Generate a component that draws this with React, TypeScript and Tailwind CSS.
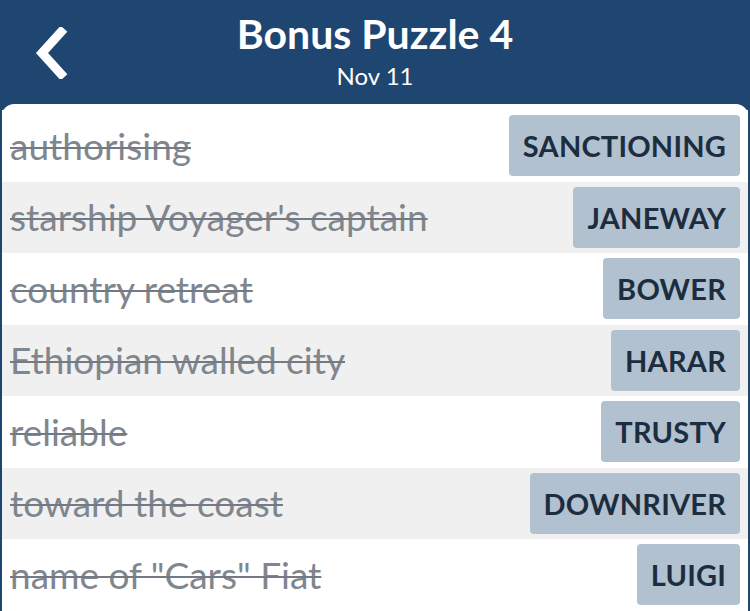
import React from 'react';

type Clue = {
  clue: string;
  answer: string;
};

const CLUES: Clue[] = [
  { clue: 'authorising', answer: 'SANCTIONING' },
  { clue: "starship Voyager's captain", answer: 'JANEWAY' },
  { clue: 'country retreat', answer: 'BOWER' },
  { clue: 'Ethiopian walled city', answer: 'HARAR' },
  { clue: 'reliable', answer: 'TRUSTY' },
  { clue: 'toward the coast', answer: 'DOWNRIVER' },
  { clue: 'name of "Cars" Fiat', answer: 'LUIGI' },
];

function BackIcon(): React.ReactElement {
  return (
    <svg width="34" height="52" viewBox="0 0 34 52" fill="none">
      <path
        d="M27 5 L8 26 L27 47"
        stroke="white"
        strokeWidth="9"
        strokeLinecap="square"
        strokeLinejoin="miter"
      />
    </svg>
  );
}

export default function App(): React.ReactElement {
  return (
    <div
      className="flex h-[611px] w-[750px] flex-col overflow-hidden bg-[#1f4571]"
      style={{ fontFamily: 'Lato, "Open Sans", sans-serif' }}
    >
      {/* шапка */}
      <header className="relative flex h-[104px] shrink-0 flex-col items-center text-white">
        <button className="absolute top-[27px] left-[34px] p-0">
          <BackIcon />
        </button>
        <h1 className="mt-[9px] text-[41px] leading-[50px] font-bold">
          Bonus Puzzle 4
        </h1>
        <p className="mt-[2px] text-[24px] leading-[30px]">Nov 11</p>
      </header>

      <div className="mx-[2px] flex-1 rounded-t-[12px] bg-white pt-[6px]">
        {CLUES.map((item, index) => (
          <div
            key={item.answer}
            className={`flex h-[71.5px] items-center justify-between pr-[8px] pl-[8px] ${
              index % 2 === 1 ? 'bg-[#f0f0f0]' : 'bg-white'
            }`}
          >
            <span className="text-[37px] leading-[44px] text-[#80868e] line-through decoration-[#737a83] decoration-2">
              {item.clue}
            </span>
            <span className="flex h-[61px] items-center rounded-[4px] bg-[#b1c1d0] px-[14px] text-[29px] font-bold tracking-[0.2px] text-[#1c2d3f]">
              {item.answer}
            </span>
          </div>
        ))}
      </div>
    </div>
  );
}
